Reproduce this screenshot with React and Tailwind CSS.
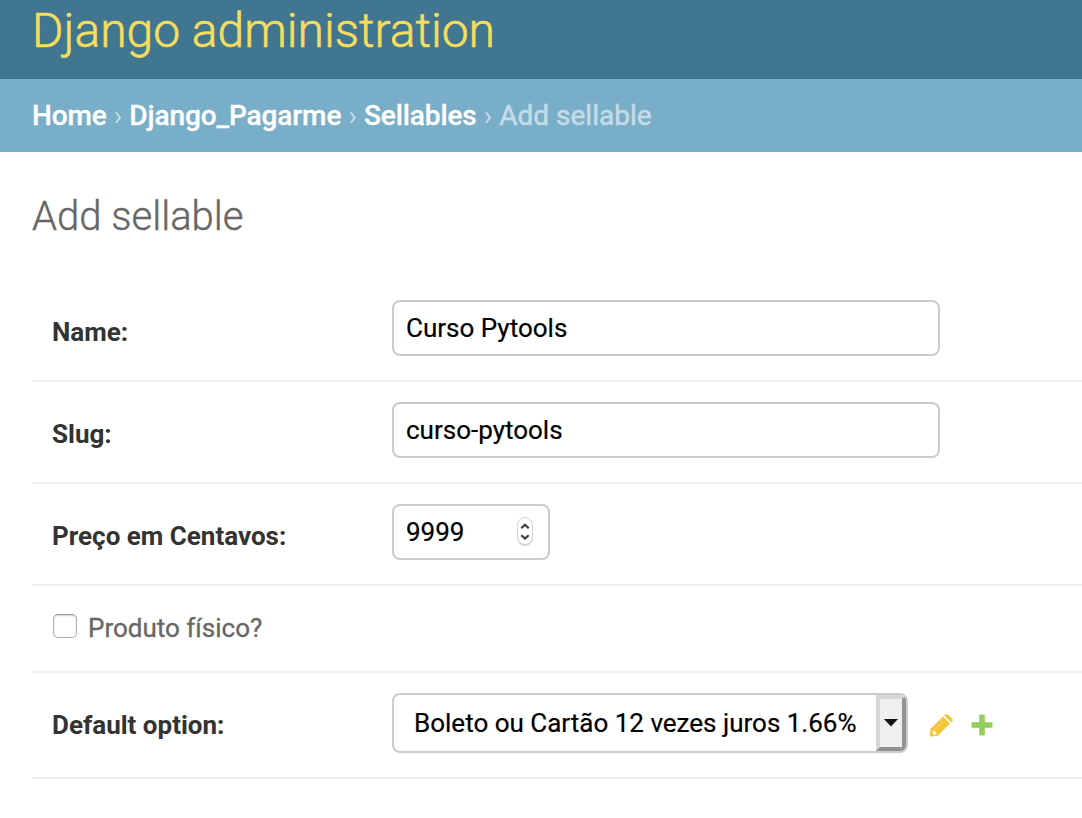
import React from 'react';

const crumb = 'font-medium tracking-[-0.1px] text-white [-webkit-text-stroke:0.3px_#fff]';

function Row({ label, children, className = 'h-[102px] pt-5' }) {
  return (
    <div className={`flex border-b-2 border-[#eeeeee] pl-5 ${className}`}>
      <label className="w-[340px] shrink-0 pt-[17px] text-[26px] leading-[30px] font-bold text-[#333333]">{label}</label>
      {children}
    </div>
  );
}

const box = 'flex h-14 items-center rounded-lg border-2 border-[#cccccc] bg-white px-3 text-[26px] leading-[30px] text-black [-webkit-text-stroke:0.2px_#000]';

function Stepper() {
  return (
    <svg width="18" height="32" viewBox="0 0 18 32" className="mr-[2px]" fill="none">
      <rect x="1" y="3" width="16" height="27" rx="8" fill="#dcdcdc" />
      <rect x="1.500" y="1.500" width="15" height="27" rx="7.500" fill="#fff" stroke="#d2d2d2" />
      <path d="M5.300 12.200 9 8.700l3.700 3.500M5.300 19.300 9 22.600l3.700-3.300" stroke="#3c3c3c" strokeWidth="2.200" />
    </svg>
  );
}

export default function App() {
  return (
    <div className="h-[818px] w-[1082px] overflow-hidden bg-white font-['Roboto',sans-serif] whitespace-nowrap">
      <header className="h-[79px] bg-[#417690] pt-[3px] pl-8">
        <h1 className="text-[48px] leading-[56px] font-light text-[#f5dd5d] [-webkit-text-stroke:0.6px_#f5dd5d]">Django administration</h1>
      </header>
      <nav className="flex h-[73px] items-center gap-[7.1px] bg-[#79aec8] pl-8 text-[28px] text-[#c4dce8]">
        <a className={crumb}>Home</a><span>›</span>
        <a className={crumb}>Django_Pagarme</a><span>›</span>
        <a className={crumb}>Sellables</a><span>›</span>
        <span className="[-webkit-text-stroke:0.5px_#c4dce8]">Add sellable</span>
      </nav>
      <main className="pt-[41px] pl-8">
        <h2 className="mb-[39px] text-[40px] leading-[48px] font-light text-[#666666] [-webkit-text-stroke:0.4px_#666]">Add sellable</h2>
        <Row label="Name:"><div className={`${box} w-[548px]`}>Curso Pytools</div></Row>
        <Row label="Slug:"><div className={`${box} w-[548px]`}>curso-pytools</div></Row>
        <Row label="Preço em Centavos:">
          <div className={`${box} w-[158px] justify-between`}>9999<Stepper /></div>
        </Row>
        <div className="flex h-[87px] items-center border-b-2 border-[#eeeeee] pl-[21px]">
          <span className="mr-[11px] mb-[5px] h-6 w-6 rounded-[5px] border border-[#b0b0b0] border-t-[#999999] bg-white shadow-[inset_0_1px_2px_#d4d4d4]" />
          <span className="mb-[1px] text-[26px] leading-[30px] text-[#666666] [-webkit-text-stroke:0.3px_#666]">Produto físico?</span>
        </div>
        <Row label="Default option:" className="h-[106px] pt-5">
          <div className="flex h-[60px] w-[516px] justify-between overflow-hidden rounded-lg border-2 border-[#cccccc] bg-white pl-5 text-[26px] leading-[56px] text-black [-webkit-text-stroke:0.2px_#000]">
            Boleto ou Cartão 12 vezes juros 1.66%
            <span className="flex h-14 w-[30px] items-center justify-center border-4 border-t-[#d6d6d6] border-r-[#929292] border-b-[#929292] border-l-[#d6d6d6] bg-[#efefef]">
              <svg width="14" height="8" viewBox="0 0 14 8"><path d="M0 0h14L7 7.500z" fill="#111" /></svg>
            </span>
          </div>
          <svg width="24" height="24" viewBox="0 0 24 24" className="mt-[20px] ml-[21px] shrink-0">
            <path d="M1.500 23.500.9 22.900 1.500 16 14 3.500l7 7L8.500 22.900zM15.200 2.400l1-1q1.300-1 2.600 0l4.500 4.400q1 1.300 0 2.500l-1.100 1.200z" fill="#f3c53a" />
            <path d="m3.600 18.200 1.300-.7 1.100.8.300 1.300 1.200.5-.2 1.300-2 .6-1.600-1.400z" fill="#fff" />
            <path d="m6.200 16.300 8.600-8.600" stroke="#f9df93" strokeWidth=".7" />
          </svg>
          <svg width="22" height="22" viewBox="0 0 22 22" className="mt-[21px] ml-[18px] shrink-0">
            <path d="M8.800.5h4.400l.6.6v7.100h7.100l.6.6v4.400l-.6.6h-7.100v7.100l-.6.6H8.800l-.6-.6v-7.100H1.100l-.6-.6V8.800l.6-.6h7.100V1.100z" fill="#8fcf5a" />
          </svg>
        </Row>
      </main>
    </div>
  );
}
